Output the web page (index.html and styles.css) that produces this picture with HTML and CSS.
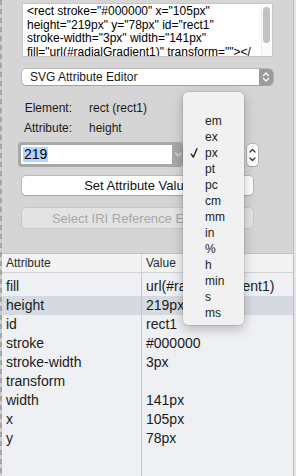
FILE: index.html
```html
<!DOCTYPE html>
<html>
<head>
<meta charset="utf-8">
<link rel="stylesheet" href="styles.css">
</head>
<body>
<div class="window">
  <div class="edge-left"></div>
  <div class="content">
    <div class="source">
      <div class="source-text">
        <div>&lt;rect stroke="#000000" x="105px"</div>
        <div>height="219px" y="78px" id="rect1"</div>
        <div>stroke-width="3px" width="141px"</div>
        <div>fill="url(#radialGradient1)" transform=""&gt;&lt;/</div>
      </div>
      <div class="scroll-track"><div class="scroll-thumb"></div></div>
    </div>

    <div class="popup">
      <span class="popup-label">SVG Attribute Editor</span>
      <span class="popup-arrows">
        <svg width="14" height="16" viewBox="0 0 14 16"><path d="M4.5 6.5 L7 4 L9.5 6.5 M4.5 9.5 L7 12 L9.5 9.5" fill="none" stroke="#fff" stroke-width="1.3" stroke-linecap="round" stroke-linejoin="round"/></svg>
      </span>
    </div>

    <div class="info">
      <span class="info-label">Element:</span><span class="info-value">rect (rect1)</span>
      <span class="info-label">Attribute:</span><span class="info-value">height</span>
    </div>

    <div class="combo-row">
      <div class="combo">
        <div class="combo-field"><span class="selected">219</span></div>
        <div class="combo-arrow">
          <svg width="11" height="19" viewBox="0 0 11 19"><path d="M3.5 8 L6.3 10.8 L9.1 8" fill="none" stroke="#dedede" stroke-width="1.2" stroke-linecap="round" stroke-linejoin="round"/></svg>
        </div>
      </div>
      <div class="stepper">
        <svg width="11" height="22" viewBox="0 0 11 22"><path d="M3 8 L5.5 5.5 L8 8 M3 14 L5.5 16.5 L8 14" fill="none" stroke="#333" stroke-width="1.2" stroke-linecap="round" stroke-linejoin="round"/></svg>
      </div>
    </div>

    <button class="btn btn-set">Set Attribute Value</button>
    <button class="btn btn-disabled">Select IRI Reference Element</button>

    <div class="table">
      <div class="thead">
        <div class="hcell hcell-attr">Attribute</div>
        <div class="hcell">Value</div>
      </div>
      <div class="tbody">
        <div class="row"><div class="cell">fill</div><div class="cell">url(#radialGradient1)</div></div>
        <div class="row row-selected"><div class="cell">height</div><div class="cell">219px</div></div>
        <div class="row"><div class="cell">id</div><div class="cell">rect1</div></div>
        <div class="row"><div class="cell">stroke</div><div class="cell">#000000</div></div>
        <div class="row"><div class="cell">stroke-width</div><div class="cell">3px</div></div>
        <div class="row"><div class="cell">transform</div><div class="cell"></div></div>
        <div class="row"><div class="cell">width</div><div class="cell">141px</div></div>
        <div class="row"><div class="cell">x</div><div class="cell">105px</div></div>
        <div class="row"><div class="cell">y</div><div class="cell">78px</div></div>
      </div>
    </div>
  </div>
  <div class="edge-right"></div>

  <div class="menu">
    <div class="menu-item">em</div>
    <div class="menu-item">ex</div>
    <div class="menu-item menu-item-checked">
      <svg class="check" width="16" height="16" viewBox="0 0 16 16"><path d="M8.3 9.2 L10.3 12.2 L14 3.8" fill="none" stroke="#222" stroke-width="1.4" stroke-linecap="round" stroke-linejoin="round"/></svg>px</div>
    <div class="menu-item">pt</div>
    <div class="menu-item">pc</div>
    <div class="menu-item">cm</div>
    <div class="menu-item">mm</div>
    <div class="menu-item">in</div>
    <div class="menu-item">%</div>
    <div class="menu-item">h</div>
    <div class="menu-item">min</div>
    <div class="menu-item">s</div>
    <div class="menu-item">ms</div>
  </div>
</div>
</body>
</html>
```

FILE: styles.css
```css
html, body {
  margin: 0;
  padding: 0;
}

body {
  width: 296px;
  height: 476px;
  overflow: hidden;
  font-family: "Liberation Sans", Arial, sans-serif;
  background: #d5d5d5;
  color: #1a1a1a;
}

.window {
  position: relative;
  display: flex;
  height: 476px;
}

.edge-left {
  flex: none;
  width: 2px;
  background: repeating-linear-gradient(to bottom, #a6a6a6 0 5px, #cdcdcd 5px 9px);
}

.edge-right {
  flex: none;
  width: 2px;
  border-left: 1px solid #bdbdbd;
  background: #e6e6e6;
}

.content {
  flex: 1;
  min-width: 0;
  display: flex;
  flex-direction: column;
  padding-top: 3px;
}

/* source text area */
.source {
  flex: none;
  margin: 0 20px;
  height: 54px;
  box-sizing: border-box;
  border: 1px solid #c6c6c6;
  background: #fff;
  display: flex;
}

.source-text {
  flex: 1;
  min-width: 0;
  overflow: hidden;
  white-space: nowrap;
  padding: 1px 0 0 4px;
  font-size: 12px;
  line-height: 13.5px;
  color: #000;
}

.scroll-track {
  flex: none;
  width: 10px;
  border-left: 1px solid #ececec;
  background: #fafafa;
}

.scroll-thumb {
  width: 7px;
  height: 36px;
  margin: 3px 0 0 1px;
  border-radius: 4px;
  background: #c2c2c2;
}

/* popup button */
.popup {
  flex: none;
  margin: 12px 20px 0;
  height: 16px;
  background: #fff;
  border-radius: 4px;
  box-shadow: 0 0 0 0.5px rgba(0, 0, 0, 0.28), 0 1px 1px rgba(0, 0, 0, 0.12);
  display: flex;
  align-items: center;
  overflow: hidden;
}

.popup-label {
  flex: 1;
  padding-left: 8px;
  font-size: 12px;
  line-height: 16px;
  color: #1a1a1a;
}

.popup-arrows {
  flex: none;
  width: 14px;
  height: 16px;
  background: #9b9b9b;
  display: flex;
}

/* info labels */
.info {
  flex: none;
  display: grid;
  grid-template-columns: 50px auto;
  column-gap: 17px;
  margin: 13px 0 0 20px;
  font-size: 12px;
  line-height: 20px;
  color: #1a1a1a;
}

.info-label {
  text-align: right;
}

/* combo box row */
.combo-row {
  flex: none;
  display: flex;
  align-items: center;
  height: 25px;
  margin: 4px 0 0 16px;
}

.combo {
  flex: none;
  width: 165px;
  height: 25px;
  box-sizing: border-box;
  border: 3px solid #a8a8a8;
  border-right: 0;
  border-radius: 4px;
  background: #fff;
  display: flex;
  overflow: hidden;
}

.combo-field {
  flex: 1;
  display: flex;
  align-items: center;
  padding-left: 2px;
  font-size: 14px;
  color: #000;
}

.selected {
  background: #b4d5fd;
  line-height: 15px;
  padding: 0 1px;
}

.combo-arrow {
  flex: none;
  width: 11px;
  background: #a8a8a8;
  display: flex;
}

.stepper {
  flex: none;
  margin-left: 64px;
  width: 11px;
  height: 22px;
  border-radius: 4px;
  background: #fff;
  box-shadow: 0 0 0 0.5px rgba(0, 0, 0, 0.3), 0 1px 1px rgba(0, 0, 0, 0.12);
  display: flex;
}

/* push buttons */
.btn {
  flex: none;
  display: block;
  margin: 0 40px 0 20px;
  padding: 0;
  border: 0;
  border-radius: 4px;
  background: #fff;
  box-shadow: 0 0 0 0.5px rgba(0, 0, 0, 0.25), 0 1px 1px rgba(0, 0, 0, 0.12);
  font-family: "Liberation Sans", Arial, sans-serif;
  font-size: 13px;
  color: #111;
  text-align: center;
}

.btn-set {
  margin-top: 9px;
  height: 19px;
}

.btn-disabled {
  margin-top: 13px;
  height: 20px;
  background: #e3e3e3;
  color: #a7a7a7;
  box-shadow: 0 0 0 0.5px rgba(0, 0, 0, 0.12);
}

/* table */
.table {
  flex: 1;
  margin-top: 25px;
  display: flex;
  flex-direction: column;
}

.thead {
  flex: none;
  display: grid;
  grid-template-columns: 140px 1fr;
  height: 20px;
  box-sizing: border-box;
  border-top: 1px solid #c2c2c2;
  border-bottom: 1px solid #d2d2d2;
  background: #f3f3f3;
  font-size: 12px;
  line-height: 18px;
  color: #2a2a2a;
}

.hcell {
  padding-left: 4px;
}

.hcell-attr {
  border-right: 1px solid #d4d4d4;
}

.tbody {
  flex: 1;
  padding-top: 4px;
  background: linear-gradient(to right, transparent 139px, #c9c9c9 139px, #c9c9c9 140px, transparent 140px), #eff0f3;
}

.row {
  display: grid;
  grid-template-columns: 140px 1fr;
  height: 19px;
  line-height: 19px;
  font-size: 14px;
  color: #1b1b1b;
}

.row-selected {
  background: linear-gradient(to right, transparent 139px, #c1c5cb 139px, #c1c5cb 140px, transparent 140px), #d5dae1;
}

.cell {
  padding-left: 4px;
  white-space: nowrap;
  overflow: hidden;
}

/* unit menu (overlay) */
.menu {
  position: absolute;
  left: 183px;
  top: 92px;
  width: 61px;
  box-sizing: border-box;
  padding: 21px 0 4px;
  background: #f1f1f1;
  border-radius: 5px;
  box-shadow: 0 0 0 0.5px rgba(0, 0, 0, 0.15), 0 4px 12px rgba(0, 0, 0, 0.25);
}

.menu-item {
  position: relative;
  height: 16px;
  line-height: 16px;
  padding-left: 22px;
  font-size: 12px;
  color: #222;
}

.check {
  position: absolute;
  left: 0;
  top: 0;
}
```
